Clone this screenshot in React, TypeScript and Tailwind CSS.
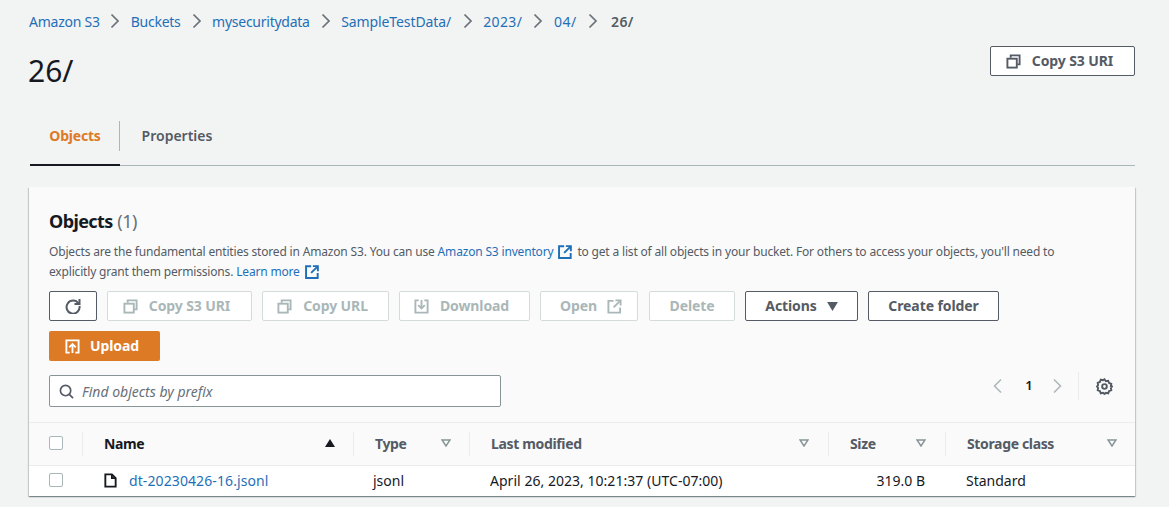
import React from "react";

const P = ({ className = "", children }: { className?: string; children: React.ReactNode }) => (
  <svg viewBox="0 0 16 16" fill="none" stroke="currentColor" strokeWidth={2} className={className}>{children}</svg>
);
const CopyI = ({ className = "" }: { className?: string }) => (
  <P className={className}><path d="M5 4V1.500h9.500V11H12" /><rect x="1.500" y="5" width="10" height="9.500" /></P>
);
const Ext = ({ className = "" }: { className?: string }) => (
  <P className={className}><path d="M7 2H1.500v12.500H14V9" /><path d="M9 1.500h5.500V7" /><path d="M14 2 7 9" /></P>
);
const ExtBold = ({ className = "" }: { className?: string }) => (
  <svg viewBox="0 0 16 16" fill="none" stroke="currentColor" strokeWidth={2.200} className={className}><path d="M7 1.500H1.200v13.300h13.300V9" /><path d="M9 1.300h5.700V7" /><path d="M14.500 1.500 7 9" /></svg>
);
const Crumb = () => (
  <svg viewBox="0 0 16 16" fill="none" stroke="currentColor" strokeWidth={1.700} className="w-4 h-4 text-[#687078]"><path d="M4.500 1.500 11 8l-6.500 6.500" /></svg>
);
const Sort = ({ solid = false }: { solid?: boolean }) => (
  <svg viewBox="0 0 10 8" className={solid ? "w-[10px] h-[8px] text-[#16191f]" : "w-[10px] h-[8px] text-[#879596]"}>
    {solid ? <path d="M5 0 10 8H0z" fill="currentColor" /> : <path d="M1 1h8L5 7z" fill="none" stroke="currentColor" strokeWidth={1.500} />}
  </svg>
);
const Btn = ({ w, dis = false, children }: { w: string; dis?: boolean; children: React.ReactNode }) => (
  <button className={`${w} h-[30px] pb-[2px] rounded-[2px] border flex items-center justify-center gap-[10px] text-[14px] font-bold tracking-[-0.1px] bg-white ${dis ? "border-[#d5dbdb] text-[#aab7b8]" : "border-[#545b64] text-[#545b64]"}`}>
    {children}
  </button>
);

const crumbs = [
  { t: "Amazon S3", c: "tracking-[-0.25px] mr-[7.500px]" },
  { t: "Buckets", c: "tracking-[-0.25px] mr-[8px]" },
  { t: "mysecuritydata", c: "tracking-[-0.25px] mr-[8px]" },
  { t: "SampleTestData/", c: "tracking-[-0.1px] mr-[8.500px]" },
  { t: "2023/", c: "tracking-[0.4px] mr-[8px]" },
  { t: "04/", c: "tracking-[0.5px] mr-[8px]" },
];

export default function App() {
  return (
    <div className="w-[1169px] h-[507px] overflow-hidden bg-[#f2f3f3] pl-[29px] pr-[34px] pt-[12px] text-[#16191f] font-['Noto_Sans',sans-serif] text-[14px]">
      <nav className="flex items-center h-[18px] text-[14px]">
        {crumbs.map((c) => (
          <React.Fragment key={c.t}>
            <span className={`text-[#1f6fb8] ${c.c}`}>{c.t}</span>
            <span className="mr-[7.500px]"><Crumb /></span>
          </React.Fragment>
        ))}
        <span className="font-semibold text-[#545b64] tracking-[0.3px] ml-[3px]">26/</span>
      </nav>
      <div className="flex justify-between h-[75px] mt-[16px]">
        <h1 className="text-[30px] leading-[40px] mt-[5px] -ml-[1px]">26/</h1>
        <Btn w="w-[145px] pr-[6px] gap-[11px]"><CopyI className="w-[15px] h-[15px] mt-[2px]" />Copy S3 URI</Btn>
      </div>
      <div className="flex h-[45px] ml-[1px] border-b border-[#aab7b8]">
        <div className="relative w-[90px] flex items-center justify-center font-bold text-[#dd7a26] text-[14px] tracking-[-0.2px] pb-[16px] after:absolute after:left-0 after:right-0 after:bottom-[-1px] after:h-[2px] after:bg-[#16191f]">
          <span>Objects</span>
          <span className="absolute right-0 top-0 h-[30px] w-px bg-[#aab7b8]" />
        </div>
        <div className="w-[112px] flex items-center justify-center font-semibold text-[#545b64] pl-[2px] pb-[16px]">Properties</div>
      </div>
      <section className="mt-[21px] w-[1106px] h-[309px] bg-[#fafafa] shadow-[0_1px_1px_0_rgba(0,28,36,0.3),1px_1px_1px_0_rgba(0,28,36,0.15),-1px_1px_1px_0_rgba(0,28,36,0.15)]">
        <div className="px-[20px] pt-[21px]">
          <h2 className="text-[18px] leading-[26px]"><span className="font-bold tracking-[-0.6px]">Objects</span> <span className="text-[#687078] tracking-[-0.5px]">(1)</span></h2>
          <p className="mt-[8px] text-[12px] leading-[20px] text-[#545b64] w-[1040px] tracking-[-0.175px]">
            Objects are the fundamental entities stored in Amazon S3. You can use <span className="text-[#1f6fb8]">Amazon S3 inventory</span>
            <ExtBold className="inline w-[14px] h-[14px] mx-[5px] -mt-[2px] text-[#1f6fb8]" />
            to get a list of all objects in your bucket. For others to access your objects, you'll need to explicitly grant them permissions. <span className="text-[#1f6fb8]">Learn more</span>
            <ExtBold className="inline w-[14px] h-[14px] ml-[5px] -mt-[2px] text-[#1f6fb8]" />
          </p>
          <div className="flex flex-wrap gap-[10px] mt-[9px] w-[1060px]">
            <Btn w="w-[48px]">
              <svg viewBox="0 0 16 16" fill="none" stroke="currentColor" strokeWidth={2} className="w-[16px] h-[16px] mt-[2px]"><path d="M13.500 5.500A6.500 6.500 0 1 0 14.500 8" /><path d="M14.500 1v5H9.500" /></svg>
            </Btn>
            <Btn w="w-[145px] pr-[6px] gap-[11px]" dis><CopyI className="w-[15px] h-[15px] mt-[2px]" />Copy S3 URI</Btn>
            <Btn w="w-[127px] pr-[6px] gap-[11px]" dis><CopyI className="w-[15px] h-[15px] mt-[2px]" />Copy URL</Btn>
            <Btn w="w-[131px] pr-[6px] gap-[11px]" dis>
              <P className="w-[15px] h-[15px] mt-[2px]"><path d="M5 1.500H1.500V14.500H14.500V1.500H11" /><path d="M8 1v8" /><path d="M4.500 6.500 8 10l3.500-3.500" /></P>
              Download
            </Btn>
            <Btn w="w-[98px] pl-[4px]" dis>Open<Ext className="w-[15px] h-[15px] mt-[2px]" /></Btn>
            <div className="pl-[1px]"><Btn w="w-[86px]" dis>Delete</Btn></div>
            <Btn w="w-[113px]">Actions
              <svg viewBox="0 0 12 10" className="w-[11px] h-[9px] mt-[2px]"><path d="M0 0h12L6 10z" fill="currentColor" /></svg>
            </Btn>
            <Btn w="w-[131px]">Create folder</Btn>
            <button className="w-[111px] h-[30px] pb-[2px] rounded-[2px] bg-[#dd7a26] text-white font-bold tracking-[-0.1px] flex items-center justify-center gap-[10px] pr-[5px]">
              <P className="w-[15px] h-[15px] mt-[2px]"><path d="M5 14.500H1.500V1.500H14.500V14.500H11" /><path d="M8 15V6" /><path d="M4.500 9 8 5.500 11.500 9" /></P>
              Upload
            </button>
          </div>
          <div className="flex items-start justify-between mt-[14px] h-[32px]">
            <div className="w-[452px] h-[32px] rounded-[2px] border border-[#879596] bg-white flex items-center pl-[9px] gap-[8px]">
              <svg viewBox="0 0 16 16" fill="none" stroke="currentColor" strokeWidth={1.800} className="w-[15px] h-[15px] text-[#545b64]"><circle cx="7" cy="7" r="5.500" /><path d="m11 11 4 4" /></svg>
              <span className="italic text-[#687078] text-[14px]">Find objects by prefix</span>
            </div>
            <div className="flex items-center text-[#aab7b8] mr-[2px] -mt-[3px]">
              <svg viewBox="0 0 16 16" fill="none" stroke="currentColor" strokeWidth={1.500} className="w-[16px] h-[16px] ml-[1px]"><path d="M11 1.500 4.500 8l6.500 6.500" /></svg>
              <span className="w-[43px] pl-[3px] text-center text-[13px] font-semibold text-[#16191f]">1</span>
              <svg viewBox="0 0 16 16" fill="none" stroke="currentColor" strokeWidth={1.500} className="w-[16px] h-[16px]"><path d="M5 1.500 11.500 8 5 14.500" /></svg>
              <span className="w-px h-[28px] bg-[#eaeded] ml-[13px] mr-[17px]" />
              <svg viewBox="0 0 16 16" fill="none" stroke="#545b64" strokeWidth={1.800} className="w-[17px] h-[17px]"><path d="M8 1.200 9.300 3l2.200-.4.800 2.100 2.100.8-.4 2.200L15 8l-1 1.300.4 2.200-2.100.8-.8 2.100-2.200-.4L8 15l-1.300-1-2.200.4-.8-2.100-2.100-.8.400-2.200L1 8l1-1.300-.4-2.200 2.100-.8.8-2.100 2.200.4z" /><circle cx="8" cy="8" r="2.200" /></svg>
            </div>
          </div>
        </div>
        <div className="mt-[15px] grid grid-cols-[54px_271px_116px_359px_117px_189px] h-[44px] border-t border-b border-[#eaeded] items-center font-bold text-[#545b64] text-[14px] tracking-[-0.35px]">
          <div className="pl-[20px] h-[24px] flex items-center border-r border-[#eaeded]"><span className="w-[14px] h-[14px] -mt-[2px] rounded-[2px] border border-[#aab7b8] bg-white" /></div>
          <div className="pl-[21px] pr-[18px] pb-[2px] h-[24px] flex items-center justify-between border-r border-[#eaeded] text-[#16191f]">Name<Sort solid /></div>
          <div className="pl-[21px] pr-[18px] pb-[2px] h-[24px] flex items-center justify-between border-r border-[#eaeded]">Type<Sort /></div>
          <div className="pl-[21px] pr-[19px] pb-[2px] h-[24px] flex items-center justify-between border-r border-[#eaeded]">Last modified<Sort /></div>
          <div className="pl-[21px] pr-[19px] pb-[2px] h-[24px] flex items-center justify-between border-r border-[#eaeded]">Size<Sort /></div>
          <div className="pl-[21px] pr-[18px] pb-[2px] h-[24px] flex items-center justify-between">Storage class<Sort /></div>
        </div>
        <div className="grid grid-cols-[54px_271px_116px_359px_117px_189px] h-[30px] pb-[2px] bg-white items-center text-[14px] text-[#16191f]">
          <div className="pl-[20px] flex"><span className="w-[14px] h-[14px] rounded-[2px] border border-[#aab7b8] bg-white" /></div>
          <div className="pl-[20px] flex items-center gap-[11px] text-[#1f6fb8] tracking-[0.1px]">
            <svg viewBox="0 0 16 16" fill="none" stroke="#16191f" strokeWidth={2} className="w-[15px] h-[15px]"><path d="M2.500 1.500h7l4 4v9h-11z" /><path d="M9.500 1.500v4h4" /></svg>
            dt-20230426-16.jsonl
          </div>
          <div className="pl-[19px]">jsonl</div>
          <div className="pl-[20px] tracking-[0.03px]">April 26, 2023, 10:21:37 (UTC-07:00)</div>
          <div className="text-right pr-[21px]">319.0 B</div>
          <div className="pl-[20px]">Standard</div>
        </div>
      </section>
    </div>
  );
}
